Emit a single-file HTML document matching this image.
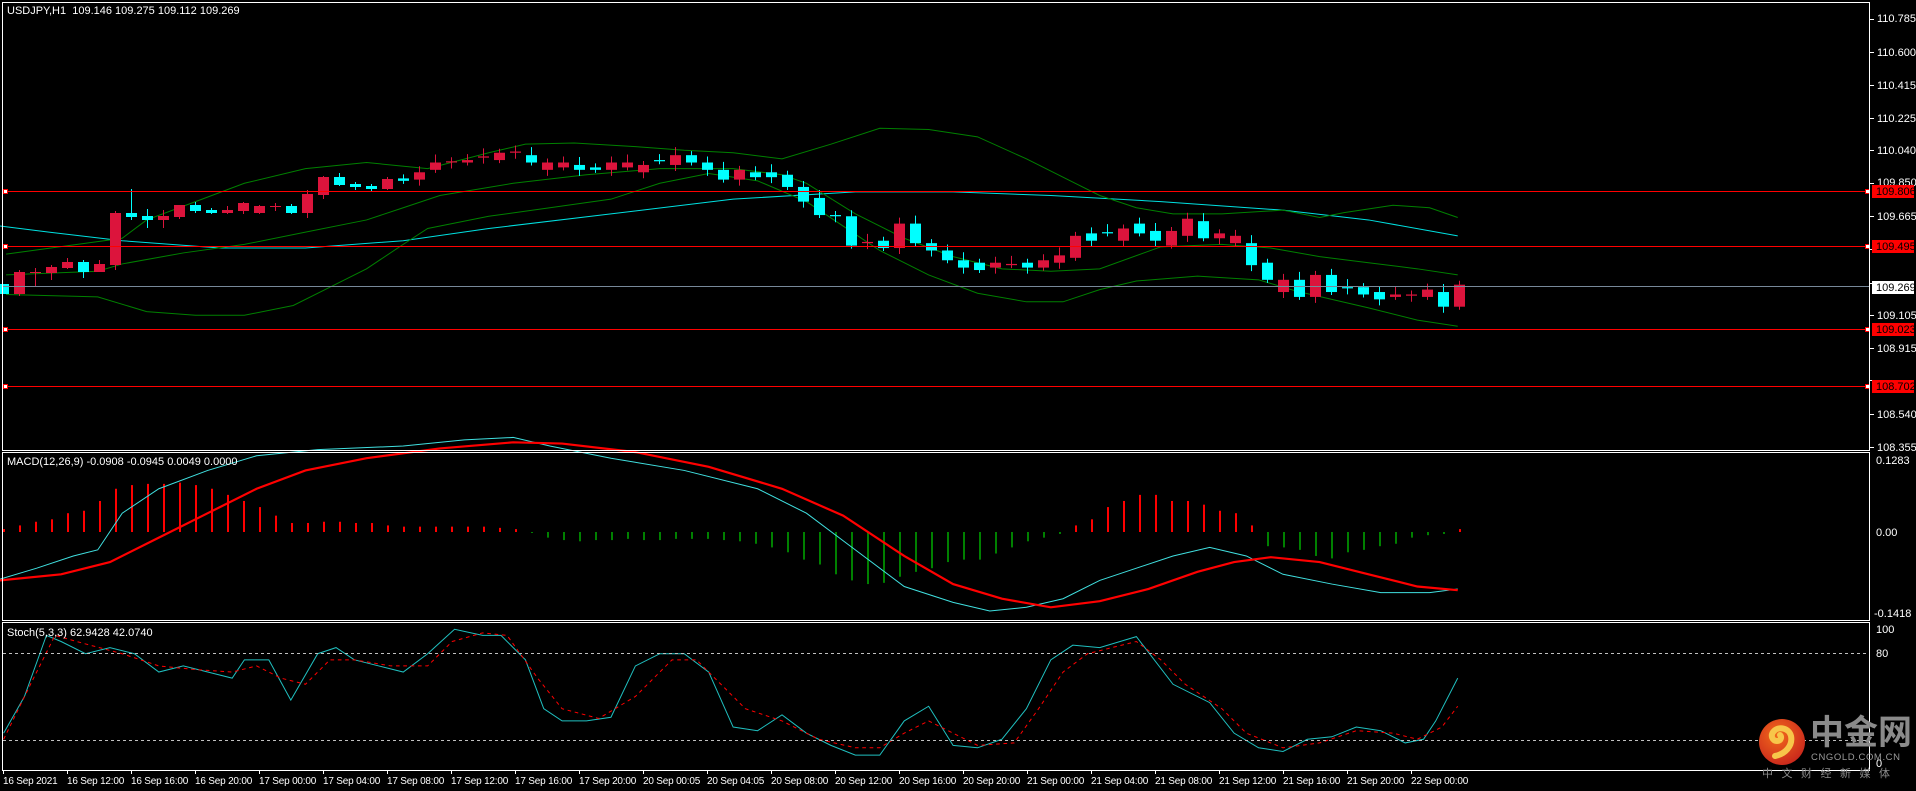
<!DOCTYPE html>
<html><head><meta charset="utf-8"><style>
html,body{margin:0;padding:0;background:#000;width:1916px;height:791px;overflow:hidden}
svg{display:block}
text{font-family:"Liberation Sans",sans-serif;font-size:11px;fill:#fff}
#tl text{font-size:10px;letter-spacing:-0.2px}
</style></head><body>
<svg id="s" width="1916" height="791" viewBox="0 0 1916 791" xmlns="http://www.w3.org/2000/svg">
<rect width="1916" height="791" fill="#000"/>
<g id="lines"></g>
<g id="cand"></g>
<line x1="3" y1="286.5" x2="1869" y2="286.5" stroke="#778899" stroke-width="1"/>
<g stroke="#ff0000" stroke-width="1">
<line x1="3" y1="191.5" x2="1869" y2="191.5"/>
<line x1="3" y1="246.5" x2="1869" y2="246.5"/>
<line x1="3" y1="329.5" x2="1869" y2="329.5"/>
<line x1="3" y1="386.5" x2="1869" y2="386.5"/>
</g>
<g fill="#fff" stroke="#f00" stroke-width="1">
<rect x="3.5" y="189.5" width="4" height="4"/><rect x="1865.5" y="189.5" width="4" height="4"/>
<rect x="3.5" y="244.5" width="4" height="4"/><rect x="1865.5" y="244.5" width="4" height="4"/>
<rect x="3.5" y="327.5" width="4" height="4"/><rect x="1865.5" y="327.5" width="4" height="4"/>
<rect x="3.5" y="384.5" width="4" height="4"/><rect x="1865.5" y="384.5" width="4" height="4"/>
</g>
<g fill="none" stroke="#fff" stroke-width="1">
<rect x="2.5" y="2.5" width="1867" height="448"/>
<rect x="2.5" y="452.5" width="1867" height="168"/>
<rect x="2.5" y="622.5" width="1867" height="148"/>
</g>
<g stroke="#c0c0c0" stroke-width="1" stroke-dasharray="3,3">
<line x1="3" y1="653.5" x2="1869" y2="653.5"/>
<line x1="3" y1="740.5" x2="1869" y2="740.5"/>
</g>
<g stroke="#fff" stroke-width="1" id="ticks"></g>
<g>
<text x="1877" y="22">110.785</text>
<text x="1877" y="56">110.600</text>
<text x="1877" y="89">110.415</text>
<text x="1877" y="122">110.225</text>
<text x="1877" y="154">110.040</text>
<text x="1877" y="186">109.850</text>
<text x="1877" y="220">109.665</text>
<text x="1877" y="319">109.105</text>
<text x="1877" y="352">108.915</text>
<text x="1877" y="418">108.540</text>
<text x="1877" y="451">108.355</text>
</g>
<rect x="1872" y="185" width="42" height="13" fill="#ff0000"/><text x="1876" y="195" style="fill:#000">109.806</text>
<rect x="1872" y="240" width="42" height="13" fill="#ff0000"/><text x="1876" y="250" style="fill:#000">109.495</text>
<rect x="1872" y="281" width="42" height="13" fill="#fff"/><text x="1876" y="291" style="fill:#000">109.269</text>
<rect x="1872" y="323" width="42" height="13" fill="#ff0000"/><text x="1876" y="333" style="fill:#000">109.023</text>
<rect x="1872" y="380" width="42" height="13" fill="#ff0000"/><text x="1876" y="390" style="fill:#000">108.702</text>
<text x="1876" y="464">0.1283</text>
<text x="1876" y="536">0.00</text>
<text x="1874" y="617">-0.1418</text>
<text x="1876" y="633">100</text>
<text x="1876" y="657">80</text>
<text x="1876" y="767">0</text>
<text x="7" y="14">USDJPY,H1&#160; 109.146 109.275 109.112 109.269</text>
<text x="7" y="465">MACD(12,26,9) -0.0908 -0.0945 0.0049 0.0000</text>
<text x="7" y="636">Stoch(5,3,3) 62.9428 42.0740</text>
<g id="tl">
<text x="3" y="784">16 Sep 2021</text>
<text x="67" y="784">16 Sep 12:00</text>
<text x="131" y="784">16 Sep 16:00</text>
<text x="195" y="784">16 Sep 20:00</text>
<text x="259" y="784">17 Sep 00:00</text>
<text x="323" y="784">17 Sep 04:00</text>
<text x="387" y="784">17 Sep 08:00</text>
<text x="451" y="784">17 Sep 12:00</text>
<text x="515" y="784">17 Sep 16:00</text>
<text x="579" y="784">17 Sep 20:00</text>
<text x="643" y="784">20 Sep 00:05</text>
<text x="707" y="784">20 Sep 04:05</text>
<text x="771" y="784">20 Sep 08:00</text>
<text x="835" y="784">20 Sep 12:00</text>
<text x="899" y="784">20 Sep 16:00</text>
<text x="963" y="784">20 Sep 20:00</text>
<text x="1027" y="784">21 Sep 00:00</text>
<text x="1091" y="784">21 Sep 04:00</text>
<text x="1155" y="784">21 Sep 08:00</text>
<text x="1219" y="784">21 Sep 12:00</text>
<text x="1283" y="784">21 Sep 16:00</text>
<text x="1347" y="784">21 Sep 20:00</text>
<text x="1411" y="784">22 Sep 00:00</text>
</g>
<defs><radialGradient id="lg" cx="0.4" cy="0.35" r="0.7"><stop offset="0" stop-color="#f26a1b"/><stop offset="1" stop-color="#c9261c"/></radialGradient></defs>
<circle cx="1782" cy="742" r="23" fill="url(#lg)"/>
<path d="M1775 756c10-2 18-10 16-20c-2-8-12-10-17-5c-4 4-2 10 3 10c4 0 5-4 3-6" fill="none" stroke="#f7c64a" stroke-width="6" stroke-linecap="round"/>
<text x="1810" y="744" style="font-family:'Noto Sans CJK SC',sans-serif;font-size:34px;font-weight:bold;fill:#8a8a8a">中金网</text>
<text x="1811" y="760" style="font-size:9.5px;fill:#9a9a9a;letter-spacing:0.6px">CNGOLD.COM.CN</text>
<text x="1762" y="777" style="font-family:'Noto Sans CJK SC',sans-serif;font-size:11px;fill:#8a8a8a;letter-spacing:8.5px">中文财经新媒体</text>
</svg>
<script>
var NS="http://www.w3.org/2000/svg";
function el(p,t,a){var e=document.createElementNS(NS,t);for(var k in a)e.setAttribute(k,a[k]);p.appendChild(e);return e;}
var s=1.2219;
var cand=document.getElementById('cand');
var R="#dc143c",C="#00ffff";
var A=[[284,294,C,284,294],[272,294,R,270,296],[272,273,R,268,287],[267,273,R,265,280],[262,268,R,258,269],[262,272,C,260,278],[264,272,R,260,272],[213,265,R,211,270],[213,217,C,189,220],[216,220,C,209,228],[216,220,R,210,228],[205,217,R,205,219],[205,211,C,202,213],[210,213,C,208,214],[210,213,R,206,214],[203,211,R,202,214],[206,213,R,205,214],[206,207,R,203,211],[206,213,C,204,214],[194,213,R,190,218],[177,195,R,176,199],[177,185,C,173,186],[184,187,C,182,190],[186,189,C,184,192],[179,189,R,177,190]];
var B=[[146,148,C],[141,147,R],[133,139,R],[132,133,R],[131,133,R],[128,129,R],[125,131,R],[124,125,R],[127,133,C],[133,139,R],[133,137,R],[135,139,C],[137,139,C],[133,139,R],[133,137,R],[135,141,R],[131,132,C],[127,135,R],[127,133,C],[133,139,C],[139,147,C],[139,147,R],[141,145,C],[141,145,C],[143,153,C],[153,165,C],[162,176,C],[176,177,C],[177,201,C],[198,199,R],[197,203,C],[183,203,R],[183,199,C],[199,205,C],[205,213,C],[213,219,C],[215,221,C],[215,219,R],[216,217,R],[215,219,C],[213,219,R],[209,215,R],[193,211,R],[191,197,C],[190,191,C],[187,197,R],[183,191,C],[189,197,C],[189,201,R],[179,193,R],[181,195,C],[191,195,R],[193,199,R],[199,217,C],[215,229,C],[229,239,R],[229,243,C],[225,243,R],[225,239,C],[235,236,C],[235,241,C],[239,245,C],[241,243,R],[241,242,R],[237,243,R],[239,251,C],[233,251,R]];
for(var i=0;i<B.length;i++){var b=B[i];A.push([b[0]*s,b[1]*s,b[2],b[0]*s-4-(i%3)*2,b[1]*s+3+(i%2)*3]);}
for(var i=0;i<A.length;i++){var a=A[i],x=3+16*i;
 el(cand,'line',{x1:x+0.5,x2:x+0.5,y1:a[3],y2:a[4],stroke:a[2],'stroke-width':1});
 var h=Math.max(1,a[1]-a[0]);
 el(cand,'rect',{x:x-5,y:a[0],width:11,height:h,fill:a[2]});}
var L=document.getElementById('lines');
var g=el(L,'g',{transform:'scale(1.2219)'});
function pl(pts,col,w,da){var a={points:pts,fill:'none',stroke:col,'stroke-width':w/s};if(da)a['stroke-dasharray']=da;el(g,'polyline',a);}
pl("0,185 40,190 100,197 180,203 250,203 330,197 400,187 500,175 600,163 700,157 780,157 860,160 950,165 1050,172 1120,180 1193,193","#00e0e0",1);
pl("5,208 100,195 120,180 160,165 200,150 250,138 300,133 350,138 400,125 430,118 470,117 520,120 560,123 600,125 640,130 680,118 720,105 760,106 800,112 840,130 880,150 900,160 930,170 960,175 1000,175 1050,172 1080,178 1100,174 1140,168 1170,170 1193,178","#008000",1);
pl("5,225 80,222 100,216 150,207 200,200 250,190 300,180 330,170 360,160 420,150 480,143 540,138 600,138 640,143 660,150 700,175 740,195 780,210 820,220 860,222 900,220 950,202 1000,200 1040,203 1080,210 1120,215 1160,220 1193,225","#008000",1);
pl("5,241 80,243 120,255 160,258 200,258 240,250 270,235 300,220 330,200 350,187 400,177 450,170 500,163 540,150 580,142 620,148 660,165 690,185 720,205 760,225 800,240 840,247 870,247 900,237 930,230 980,226 1030,229 1060,238 1090,245 1120,252 1160,262 1193,267","#008000",1);
var H=[433,430,427,425,420,418,410,400,397,396,396,395,397,400,405,410,415,422,428,428,427,427,428,428,430,431,431,431,431,431,431,432,433,436,440,442,443,442,442,441,442,442,441,441,441,442,443,445,448,452,458,462,470,475,478,477,472,468,465,460,458,458,453,448,443,440,437,430,425,415,410,405,405,410,410,413,418,420,430,447,448,450,455,457,452,450,447,445,440,438,437,433];
var Hg=el(L,'g',{});
for(var i=0;i<H.length;i++){var y=H[i]*s,x=3+16*i,z=532;
 var col=y<z?'#ff0000':'#008000';
 el(Hg,'rect',{x:x,y:Math.min(y,z),width:2,height:Math.max(1,Math.abs(y-z)),fill:col});}
var g2=el(L,'g',{transform:'scale(1.2219)'});g=g2;
pl("0,474 30,465 60,455 80,450 100,420 130,400 170,385 210,373 260,368 330,365 380,360 420,358 450,365 500,375 560,385 620,400 660,420 700,450 740,480 780,493 810,500 840,497 870,490 900,475 930,465 960,455 990,448 1020,455 1050,470 1090,478 1130,485 1170,485 1193,482","#40e0e0",1);
pl("0,475 50,470 90,460 130,440 170,420 210,400 250,385 300,375 360,367 420,362 460,363 520,370 580,382 640,400 690,422 740,455 780,478 820,490 860,497 900,492 940,482 980,468 1010,460 1040,456 1080,460 1120,470 1160,480 1193,483","#ff0000",2.2);
pl("3,600 20,570 38,520 50,525 70,535 90,530 110,535 130,550 150,545 170,550 190,555 200,540 220,540 238,573 260,535 275,530 290,540 310,545 330,550 350,535 372,515 395,520 410,520 430,540 445,580 460,590 480,590 500,587 520,545 540,535 560,535 580,550 600,595 620,598 640,585 660,600 680,610 700,618 720,618 740,590 760,578 780,610 800,612 820,605 840,580 860,540 878,528 900,530 930,521 960,560 990,575 1010,600 1030,612 1050,615 1070,605 1090,603 1110,595 1130,598 1150,608 1165,605 1175,590 1193,555","#20c0c0",1);
pl("3,605 25,560 45,520 70,527 100,535 130,545 160,548 190,550 210,545 230,555 250,560 270,540 290,540 320,545 350,545 370,525 395,518 415,520 440,555 460,580 490,588 520,570 550,540 570,540 590,560 610,580 640,590 670,605 700,612 720,612 740,600 760,590 780,600 800,610 830,608 850,580 870,550 890,535 930,525 950,540 970,560 1000,580 1020,600 1050,612 1080,608 1110,598 1140,600 1160,605 1180,595 1193,578","#ff0000",1,"3,3");
var T=document.getElementById('ticks');
for(var i=0;i<23;i++){var x=3.5+64*i;el(T,'line',{x1:x,x2:x,y1:770,y2:774});}
var py=[19,52,85,118,150,183,216,249,283,315,348,380,414,447];
for(var i=0;i<py.length;i++)el(T,'line',{x1:1870,x2:1874,y1:py[i]+.5,y2:py[i]+.5});
</script>
</body></html>
